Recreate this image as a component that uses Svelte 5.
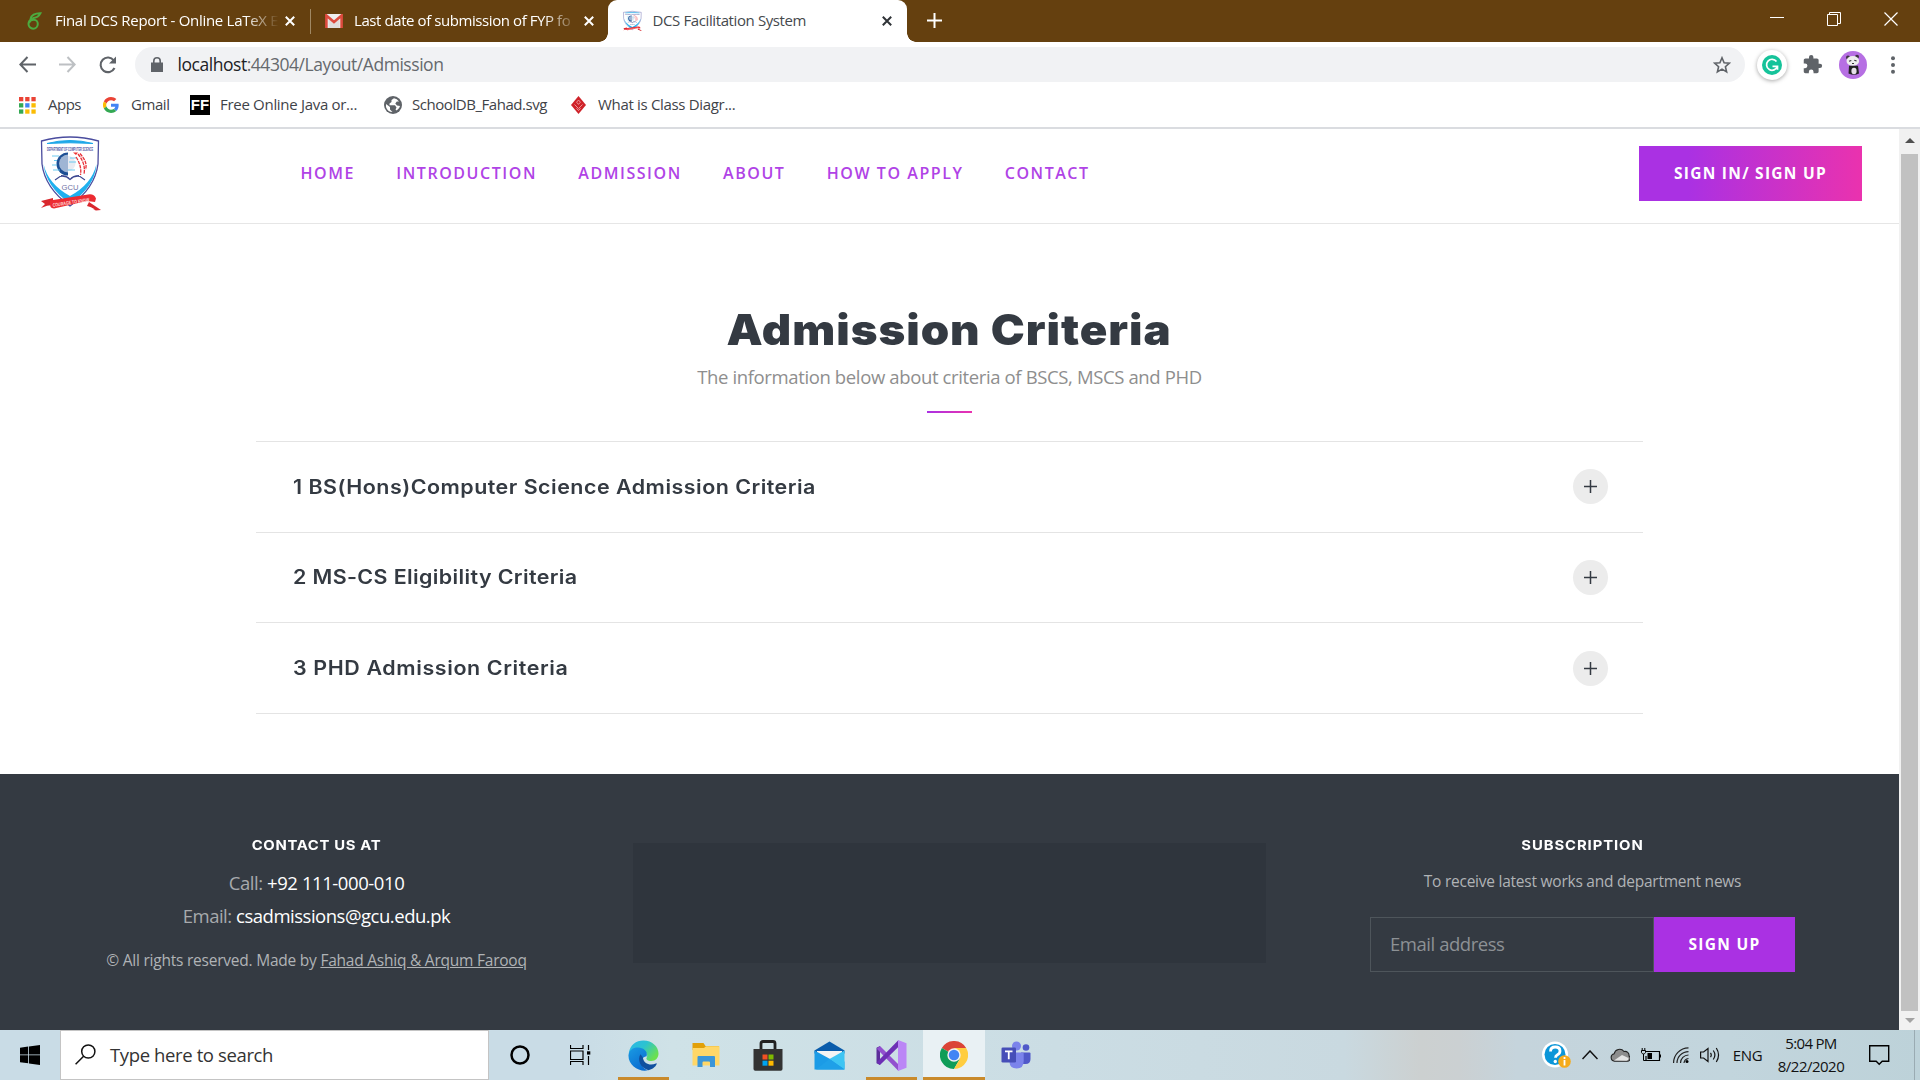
<script>
  const bookmarks = [
    { icon: 'apps', label: 'Apps', cls: 'bm-apps' },
    { icon: 'google', label: 'Gmail', cls: 'bm-gmail' },
    { icon: 'ff', label: 'Free Online Java or...', cls: 'bm-java' },
    { icon: 'globe', label: 'SchoolDB_Fahad.svg', cls: 'bm-school' },
    { icon: 'diamond', label: 'What is Class Diagr...', cls: 'bm-diagram' }
  ];
  const navItems = ['HOME', 'INTRODUCTION', 'ADMISSION', 'ABOUT', 'HOW TO APPLY', 'CONTACT'];
  const criteria = [
    '1 BS(Hons)Computer Science Admission Criteria',
    '2 MS-CS Eligibility Criteria',
    '3 PHD Admission Criteria'
  ];
  const apps = [
    { name: 'edge', open: true },
    { name: 'explorer' },
    { name: 'store' },
    { name: 'mail' },
    { name: 'vs', open: true },
    { name: 'chrome', active: true },
    { name: 'teams' }
  ];
  const appDots = [0, 6.2, 12.4];
  const appColors = ['#ea4335', '#ea4335', '#ea4335', '#34a853', '#4285f4', '#fbbc04', '#34a853', '#fbbc04', '#fbbc04'];
</script>

{#snippet crest()}
  <svg class="crest" viewBox="0 0 61 75" preserveAspectRatio="none">
    <path d="M1.5 5Q30-3 58.5 5L58 28Q55 52 30 70Q5 52 2 28Z" fill="#fff" stroke="#4a4c9e" stroke-width="1.3" />
    <path d="M7 7.5Q30 1.5 53 7.5Q30 6 7 7.5Z" fill="#1fa8e8" stroke="#1fa8e8" />
    <path d="M3.5 28Q8 48 30 60Q52 48 56.500 28Q55 51 30 67.500Q6 51 3.500 28Z" fill="#1fb0ee" />
    <text x="7" y="15.300" font-size="4.800" font-weight="700" textLength="46" lengthAdjust="spacingAndGlyphs" fill="#4d529f">DEPARTMENT OF COMPUTER SCIENCE</text>
    <path d="M28 16.500A11.500 11.500 0 0 0 28 39.500Z" fill="#1d4f94" />
    <path d="M28 18.500a9 9 0 0 0 0 18Z" fill="#9fb5d4" />
    <path d="M28 20a7.500 7.500 0 0 1 0 15Z" fill="#e8ebf2" />
    <path d="M12 20h7M14 24.500h3M12 29h5M13 34h7M30 22h6M29 26h7M28 34h7" stroke="#5cc4ee" stroke-width=".9" />
    <path d="M33 16.500h5l-2 2.500z" fill="#e33" />
    <path d="M38 18q8 10 6 20M40 17.500q8 9 5.500 16M36 21q6 9 4.500 18" fill="none" stroke="#e8323a" stroke-width="1.300" stroke-dasharray="3.500 .9" />
    <path d="M15 44l5-3.500q6-1 10 3q4-4 10-3l5 3.500M21 39.500q6 0 9 4q3-4 9-4" fill="none" stroke="#3a4690" stroke-width="1.100" />
    <text x="21.500" y="54.300" font-size="8" textLength="17" lengthAdjust="spacingAndGlyphs" fill="#7173a6">GCU</text>
    <path d="M1 65l12-3v7q-6 0-12 3l4-4zM49 66l12 8-5 .5-3-1 2 0q-4-3-8-3.500z" fill="#d9272d" />
    <path d="M10 64.500l38-6q6-1 8 4l-1 3.500-8-1-33 7.500q-5 0-4-8z" fill="#ec2b31" />
    <text x="13" y="71" font-size="5" font-weight="700" transform="rotate(-9 13 71)" textLength="37" lengthAdjust="spacingAndGlyphs" fill="#ffd9d9">COURAGE TO KNOW</text>
  </svg>
{/snippet}

{#snippet cross(cls)}
  <svg class={cls} viewBox="0 0 10 10"><path d="M.8.800l8.400 8.400M9.200.800L.800 9.200" stroke="currentColor" stroke-width="2" /></svg>
{/snippet}

{#snippet bookmarkIcon(name)}
  {#if name === 'apps'}
    <svg class="bicon" width="17" height="17" viewBox="0 0 17 17">
      {#each appColors as c, i}
        <rect x={appDots[i % 3]} y={appDots[Math.floor(i / 3)]} width="4.300" height="4.300" fill={c} />
      {/each}
    </svg>
  {:else if name === 'google'}
    <svg class="bicon" width="16" height="16" viewBox="0 0 48 48">
      <path fill="#ea4335" d="M24 9.500c3.500 0 6.700 1.200 9.200 3.600l6.900-6.900C35.900 2.400 30.500 0 24 0 14.600 0 6.500 5.400 2.600 13.200l8 6.200C12.400 13.700 17.700 9.500 24 9.500z" />
      <path fill="#4285f4" d="M47 24.500c0-1.600-.2-3.100-.4-4.500H24v9h12.900c-.6 3-2.200 5.500-4.700 7.200l7.700 6C44.400 38 47 31.800 47 24.500z" />
      <path fill="#fbbc05" d="M10.500 28.600A14 14 0 0 1 10.500 19.400l-8-6.200a24 24 0 0 0 0 21.600z" />
      <path fill="#34a853" d="M24 48c6.500 0 11.900-2.100 15.900-5.800l-7.700-6c-2.200 1.400-4.900 2.300-8.200 2.300-6.300 0-11.600-4.200-13.500-9.900l-8 6.200C6.500 42.600 14.600 48 24 48z" />
    </svg>
  {:else if name === 'ff'}
    <span class="ff">FF</span>
  {:else if name === 'globe'}
    <svg class="bicon" width="18" height="18" viewBox="0 0 18 18">
      <circle cx="9" cy="9" r="9" fill="#5f6368" />
      <path d="M2 8l4 3v2.500l2.500 2.500q-5 0-6.500-5zM10 2.200L7.500 4v2L5.500 7.500v1.800h5.500l1.500 2.200-1 2 1.200 1q3-2 3.300-4.500l-3-.5-1.700-2 1.500-2h2.200Q13 2.800 10 2.200z" fill="#fff" />
    </svg>
  {:else}
    <svg class="bicon" width="15" height="18" viewBox="0 0 15 18">
      <path d="M7.500 0L15 9l-7.500 9L0 9z" fill="#cf2229" />
      <path d="M7.500 4l1.900 2.200-1.900 2.200-1.900-2.200zM3.500 8.500l4 4 4-4M5.500 12.300l2 2.200 2-2.200" fill="none" stroke="#eda3a6" stroke-width=".9" />
    </svg>
  {/if}
{/snippet}

{#snippet appIcon(name)}
  {#if name === 'edge'}
    <svg width="31" height="31" viewBox="0 0 31 31">
      <defs>
        <linearGradient id="eg1" x1="0" y1="0" x2="1" y2=".6"><stop offset="0" stop-color="#2bb5ea" /><stop offset=".5" stop-color="#2cc3d0" /><stop offset="1" stop-color="#6be04f" /></linearGradient>
        <linearGradient id="eg2" x1="0" y1="0" x2=".6" y2="1"><stop offset="0" stop-color="#1a9be3" /><stop offset="1" stop-color="#0a6cd0" /></linearGradient>
      </defs>
      <path d="M.8 13C2 5 8 .5 15.500.5 24 .5 30.500 6.500 30.500 13.500c0 4.500-3 7.500-7 7.500-4 0-5.500-1.500-5-3 1.800-2.500.3-6-4-7C9 9.800 3.500 11 .8 13z" fill="url(#eg1)" />
      <path d="M.5 15C1 10 5.500 7.300 10 7.500c6.500.2 10 4.500 8.500 9-4 0-6 4-4.500 8 1 3 3 5 6 5.800-9 2-20-5-19.500-15.300z" fill="url(#eg2)" />
      <path d="M12.500 14.200c-3.500 5.300-.5 13.300 8 16 3.500-.7 7-3.200 8.200-6.200.2-.6-.3-.9-.8-.6-5.500 2.800-12.500.3-13-5.900z" fill="#10509f" />
    </svg>
  {:else if name === 'explorer'}
    <svg width="28" height="24" viewBox="0 0 28 24">
      <path d="M.5 0h11l2 3h13.500v4H.5z" fill="#e2a008" />
      <path d="M.5 5h11.500l2-1.800h13.500v19.300H.5z" fill="#ffd768" />
      <path d="M5.500 24V14q0-1 1-1h15.500q1 0 1 1v10h-5v-4.500q0-1-1-1h-5.500q-1 0-1 1V24z" fill="#3b96d8" />
    </svg>
  {:else if name === 'store'}
    <svg width="30" height="31" viewBox="0 0 30 31">
      <path d="M8 10V3.500q0-2 2-2h10q2 0 2 2V10" fill="none" stroke="#222" stroke-width="2.800" />
      <path d="M.5 9h29v20q0 1.800-1.800 1.800H2.300Q.5 30.800.5 29z" fill="#333" />
      <path d="M9.500 14.500h5v5h-5z" fill="#f25022" /><path d="M15.500 14.500h5v5h-5z" fill="#7fba00" />
      <path d="M9.500 20.700h5v5h-5z" fill="#00a4ef" /><path d="M15.500 20.700h5v5h-5z" fill="#ffb900" />
    </svg>
  {:else if name === 'mail'}
    <svg width="31" height="29" viewBox="0 0 31 29">
      <path d="M15.500.5L30.500 9.500v3H.5v-3z" fill="#0a5cab" />
      <path d="M3 10h25v8l-12.500 5L3 18z" fill="#f4f4f4" />
      <path d="M.5 9.500l22 12 8-1V28.500H.5z" fill="#1b9be6" />
      <path d="M30.500 9.500L15.500 18l15 10.500z" fill="#3ec5f3" />
      <path d="M15.500 18l15 10.500H2z" fill="#1fa0e8" />
    </svg>
  {:else if name === 'vs'}
    <svg width="31" height="31" viewBox="0 0 31 31">
      <path d="M.5 7.800L4 6v19L.5 23.200z" fill="#5c2d9b" />
      <path d="M4 6L22.500 24.500V31L.8 8.800z" fill="#9250cf" />
      <path d="M4 25L22.500 6.800V0L.8 22.200z" fill="#6d2fb5" />
      <path d="M22 0l8.500 3.300v24.400L22 31z" fill="#bb86f6" />
    </svg>
  {:else if name === 'chrome'}
    <svg width="28" height="28" viewBox="0 0 48 48">
      <path d="M24 24L3.200 12A24 24 0 0 1 44.800 12z" fill="#db4437" />
      <path d="M24 24L3.200 12A24 24 0 0 0 24 48l10.400-18z" fill="#0f9d58" />
      <path d="M24 12h20.800A24 24 0 0 1 24 48l10.400-18z" fill="#ffcd40" />
      <circle cx="24" cy="24" r="11.500" fill="#f1f1f1" /><circle cx="24" cy="24" r="9" fill="#4285f4" />
    </svg>
  {:else}
    <svg width="30" height="28" viewBox="0 0 30 28">
      <circle cx="25" cy="6.500" r="3.300" fill="#5059c9" />
      <path d="M20 11.500h8.500q1 0 1 1V18q0 5-5 5h-4z" fill="#5059c9" />
      <circle cx="15.500" cy="5" r="4.500" fill="#7b83eb" />
      <path d="M9.500 11.500h12q1.200 0 1.200 1.200V20q0 7.500-7 7.500T8.500 21z" fill="#7b83eb" />
      <rect x=".5" y="6.500" width="14.500" height="15" rx="1.300" fill="#464eb8" />
      <path d="M4 10.300h7.500M7.750 10.300v8" stroke="#fff" stroke-width="1.800" />
    </svg>
  {/if}
{/snippet}

<div class="screen">
  <div class="tabstrip">
    <div class="tab tab-a">
      <svg width="15" height="18" viewBox="0 0 15 18"><path d="M5.500 6.500C2.500 8 1.500 10 1.500 12a4.600 4.600 0 0 0 9.300 0c0-2.500-1.700-4.300-4-4.300-2 0-3.800 1-4.800 3M3.500 7C4 3.500 8 1 13.500 1.200 12 4.500 9 6 5.500 6.300" fill="none" stroke="#4cab3f" stroke-width="2" /></svg>
      <span class="tab-title t1">Final DCS Report - Online LaTeX E</span>
      {@render cross('x')}
    </div>
    <i class="sep"></i>
    <div class="tab tab-b">
      <svg width="18" height="14" viewBox="0 0 18 14"><path d="M1 0h16v14H1z" fill="#eee" /><path d="M3.500 14V5L9 9.500 14.500 5v9" fill="#e0dedc" /><path d="M1.400 14V1.500L9 8l7.600-6.500V14" fill="none" stroke="#dd4b3e" stroke-width="2.600" /></svg>
      <span class="tab-title t2">Last date of submission of FYP fo</span>
      {@render cross('x')}
    </div>
    <div class="tab active">
      <span class="favicon">{@render crest()}</span>
      <span class="tab-title t3">DCS Facilitation System</span>
      {@render cross('x dark')}
    </div>
    <svg class="plus-tab" width="15" height="15" viewBox="0 0 15 15"><path d="M7.500 0v15M0 7.500h15" stroke="#fff" stroke-width="2" /></svg>
    <div class="winctl">
      <svg width="14" height="14" viewBox="0 0 14 14"><path d="M0 5.500h14" stroke="#fff" /></svg>
      <svg width="14" height="14" viewBox="0 0 14 14"><path d="M.5 2.500h10v11H.5zM2.500 2.500V.5h11v11h-2.500" fill="none" stroke="#fff" /></svg>
      <svg width="14" height="14" viewBox="0 0 14 14"><path d="M.5.500l13 13M13.500.500l-13 13" stroke="#fff" stroke-width="1.200" /></svg>
    </div>
  </div>

  <div class="toolbar">
    <div class="navbtns">
      <svg width="17" height="17" viewBox="0 0 17 17"><path d="M17 8.500H1.500M8.500 1L1.300 8.500l7.200 7.500" fill="none" stroke="#5f6368" stroke-width="2" /></svg>
      <svg width="17" height="17" viewBox="0 0 17 17"><path d="M0 8.500h15.500M8.500 1l7.200 7.500L8.500 16" fill="none" stroke="#bdc0c3" stroke-width="2" /></svg>
      <svg width="18" height="18" viewBox="0 0 18 18"><path d="M15.500 12A7.300 7.300 0 1 1 14.800 4.500" fill="none" stroke="#5f6368" stroke-width="2.100" /><path d="M17 .5v7h-7z" fill="#5f6368" /></svg>
    </div>
    <div class="omnibox">
      <svg width="12" height="15" viewBox="0 0 12 15"><path d="M0 5.500h12V15H0z" fill="#5f6368" /><path d="M2.800 6V4a3.200 3.200 0 0 1 6.400 0v2" fill="none" stroke="#5f6368" stroke-width="1.600" /></svg>
      <span class="url"><b>localhost</b>:44304/Layout/Admission</span>
      <svg class="star" width="18" height="18" viewBox="0 0 18 18"><path d="M9 1.800l2.100 4.900 5.300.5-4 3.500 1.200 5.200L9 13.100l-4.600 2.800 1.200-5.200-4-3.500 5.300-.5z" fill="none" stroke="#5f6368" stroke-width="1.600" /></svg>
    </div>
    <span class="grammarly"><svg width="20" height="20" viewBox="0 0 20 20"><circle cx="10" cy="10" r="10" fill="#15c39a" /><path d="M14.500 6.500A5.500 5.500 0 1 0 15.300 11.500M10.500 11.300h5v3.500" fill="none" stroke="#fff" stroke-width="1.700" /></svg></span>
    <svg class="puzzle" width="21" height="21" viewBox="0 0 24 24"><path d="M20.500 11H19V7c0-1.100-.9-2-2-2h-4V3.500a2.500 2.500 0 0 0-5 0V5H4c-1.100 0-2 .9-2 2v3.800h1.500a2.700 2.700 0 0 1 0 5.400H2V20c0 1.100.9 2 2 2h3.800v-1.500a2.700 2.700 0 0 1 5.400 0V22H17c1.100 0 2-.9 2-2v-4h1.500a2.500 2.500 0 0 0 0-5z" fill="#5f6368" /></svg>
    <svg class="avatar" width="28" height="28" viewBox="0 0 28 28">
      <circle cx="14" cy="14" r="14" fill="#b66fe3" />
      <circle cx="9" cy="6.500" r="2" fill="#3c3340" /><circle cx="18" cy="5.800" r="2" fill="#3c3340" />
      <ellipse cx="13.800" cy="10" rx="6.300" ry="5" fill="#eee" />
      <path d="M10 10.300l2.300-.8M15.300 9.300l2.300.7M13 12.500h2" stroke="#333" stroke-width="1.200" />
      <path d="M10 14.800h9l1 7.700q-5 2.500-10.500 0z" fill="#222" /><ellipse cx="15" cy="20" rx="2.600" ry="3.300" fill="#e5e0e8" />
    </svg>
    <svg class="dots" width="4" height="18" viewBox="0 0 4 18"><circle cx="2" cy="2.200" r="2" fill="#5f6368" /><circle cx="2" cy="9" r="2" fill="#5f6368" /><circle cx="2" cy="15.800" r="2" fill="#5f6368" /></svg>
  </div>

  <div class="bookmarks">
    {#each bookmarks as b}
      <span class="bookmark {b.cls}">{@render bookmarkIcon(b.icon)}<span class="bm-label">{b.label}</span></span>
    {/each}
  </div>

  <div class="viewport">
    <div class="page">
      <header>
        <span class="logo">{@render crest()}</span>
        <nav>
          {#each navItems as item}<a href="#top">{item}</a>{/each}
        </nav>
        <button class="signin">SIGN IN/ SIGN UP</button>
      </header>

      <main>
        <h1>Admission Criteria</h1>
        <p class="sub">The information below about criteria of BSCS, MSCS and PHD</p>
        <i class="rule"></i>
        <div class="accordion">
          {#each criteria as c}
            <div class="row">
              <span class="title">{c}</span>
              <span class="plus"><svg width="13" height="13" viewBox="0 0 13 13"><path d="M6.500 0v13M0 6.500h13" stroke="#343a42" stroke-width="1.500" /></svg></span>
            </div>
          {/each}
        </div>
      </main>

      <footer>
        <section>
          <h4>CONTACT US AT</h4>
          <p class="line call">Call: <b>+92 111-000-010</b></p>
          <p class="line email">Email: <b>csadmissions@gcu.edu.pk</b></p>
          <p class="copy">© All rights reserved. Made by <u>Fahad Ashiq &amp; Arqum Farooq</u></p>
        </section>
        <section><div class="panel"></div></section>
        <section>
          <h4 class="subscr">SUBSCRIPTION</h4>
          <p class="news">To receive latest works and department news</p>
          <div class="form">
            <span class="field">Email address</span>
            <button>SIGN UP</button>
          </div>
        </section>
      </footer>
    </div>
    <div class="scrollbar">
      <i class="up"></i>
      <i class="thumb"></i>
      <i class="down"></i>
    </div>
  </div>

  <div class="taskbar">
    <span class="start"><svg width="20" height="20" viewBox="0 0 20 20"><path d="M0 2.800l8.200-1.200V9.500H0zM9 1.500L20 0v9.500H9zM0 10.300h8.200v8L0 17.200zM9 10.300h11V20L9 18.500z" fill="#000" /></svg></span>
    <div class="search">
      <svg width="21" height="21" viewBox="0 0 21 21"><circle cx="13.300" cy="7.500" r="6.600" fill="none" stroke="#111" stroke-width="1.500" /><path d="M8.600 12.300L.6 20.300" stroke="#111" stroke-width="1.500" /></svg>
      <span>Type here to search</span>
    </div>
    <span class="slot"><svg width="20" height="20" viewBox="0 0 20 20"><circle cx="10" cy="10" r="8.500" fill="none" stroke="#000" stroke-width="2.500" /></svg></span>
    <span class="slot"><svg width="21" height="20" viewBox="0 0 21 20"><path d="M.5 0v3.500h12.500V0M.5 6h12.500v8.500H.5zM.5 20v-3.500h12.500V20M18.500 0v5M18.500 11v9" fill="none" stroke="#000" stroke-width="1.200" /><path d="M17 6.300h3.300v3.300H17z" /></svg></span>
    <div class="apps">
      {#each apps as a}
        <span class="app" class:open={a.open} class:current={a.active}>{@render appIcon(a.name)}</span>
      {/each}
    </div>
    <div class="tray">
      <svg width="29" height="28" viewBox="0 0 29 28"><circle cx="13" cy="13.500" r="13" fill="#fff" /><circle cx="13" cy="13.500" r="10.500" fill="#0b96d8" /><path d="M8.500 10.500q0-4.500 4.800-4.500 4.700 0 4.700 4 0 2.500-2.500 3.800-2 1-2 3" fill="none" stroke="#fff" stroke-width="2.800" /><circle cx="13.300" cy="20.500" r="1.700" fill="#fff" /><circle cx="22.500" cy="20.500" r="6.300" fill="#f5ab1b" /><path d="M22.500 19v5.500M22.500 16v2" stroke="#fff" stroke-width="1.800" /></svg>
      <svg width="16" height="10" viewBox="0 0 16 10"><path d="M.5 9L8 1l7.500 8" fill="none" stroke="#111" stroke-width="1.500" /></svg>
      <svg width="20" height="14" viewBox="0 0 20 14"><path d="M4.500 13.200a3.800 3.800 0 0 1-.3-7.500A5.500 5.500 0 0 1 14 3.500a4 4 0 0 1 5 4.500 2.900 2.900 0 0 1-2 5.200z" fill="#8d8d8d" stroke="#222" stroke-width="1.100" /><path d="M4 12.500l8-5.500 6.500 3q0 2.500-2 2.700z" fill="#e4e4e4" /></svg>
      <svg width="20" height="14" viewBox="0 0 20 14"><path d="M5 3.500h13.500v9H5V8" fill="none" stroke="#000" stroke-width="1.200" /><path d="M6.500 5h4.500v6h-4.500zM18.500 6.500H20v3h-1.500z" /><path d="M.5 2.500h4v2q-.7 1.500-2 1.500T.5 4.500zM1.200 0v2.500M3.800 0v2.500M2.500 6v6.500H5" fill="none" stroke="#000" /></svg>
      <svg width="16" height="16" viewBox="0 0 16 16"><g fill="none" stroke="#222" stroke-width="1.200"><path d="M.6 16A15 15 0 0 1 15.500.8M4 16A11.500 11.500 0 0 1 15.500 4.600M7.500 16a8 8 0 0 1 8-8M11 16q.5-4 4.500-4.500" /></g><circle cx="14" cy="14.500" r="1.500" /></svg>
      <svg width="20" height="16" viewBox="0 0 20 16"><g fill="none" stroke="#111" stroke-width="1.200"><path d="M.6 5h3L8 1.500v13L3.600 11h-3z" /><path d="M10.500 5.800q1.500 2.200 0 4.400M13.300 3.500q3.200 4.500 0 9M16.300 1q4.500 7 0 14" /></g></svg>
      <span class="lang">ENG</span>
      <span class="clock"><span class="time">5:04 PM</span><span class="date">8/22/2020</span></span>
      <svg class="note" width="21" height="21" viewBox="0 0 21 21"><path d="M.700.700h19v15.600h-6.500l-3 3-3-3H.700z" fill="none" stroke="#000" stroke-width="1.400" /></svg>
      <i class="desk"></i>
    </div>
  </div>
</div>

<style>
  :global(body) { margin: 0; overflow: hidden; }
  .screen, .screen * { box-sizing: border-box; }
  .screen { width: 1920px; height: 1080px; display: flex; flex-direction: column; background: #fff; font-family: 'Open Sans', sans-serif; }
  .screen svg { display: block; flex: none; }
  p, h1, h4 { margin: 0; }
  i { display: block; }
  .crest { width: 100%; height: 100%; overflow: visible; font-family: 'Liberation Sans', sans-serif; }

  /* browser tabs */
  .tabstrip { height: 42px; display: flex; background: #65400f; color: #fff; font-size: 15px; }
  .tab { height: 41px; display: flex; align-items: center; }
  .tab-a { width: 310px; padding: 0 15px 0 27px; gap: 13px; }
  .tab-b { width: 297px; padding: 0 14px 0 14px; gap: 11px; }
  .tab-title { flex: none; white-space: nowrap; line-height: 24px; padding-bottom: 2px; }
  .t1 { letter-spacing: -0.29px; margin-right: -12px; -webkit-mask-image: linear-gradient(90deg, #000 190px, transparent 224px); mask-image: linear-gradient(90deg, #000 190px, transparent 224px); }
  .t2 { letter-spacing: -0.42px; margin-right: -12px; -webkit-mask-image: linear-gradient(90deg, #000 190px, transparent 224px); mask-image: linear-gradient(90deg, #000 190px, transparent 224px); }
  .x { width: 10px; height: 10px; margin-left: auto; }
  .sep { width: 1px; height: 25px; margin-top: 9px; background: #a08863; }
  .active { position: relative; width: 299px; height: 42px; padding: 0 15px 1px 15px; background: #fff; border-radius: 9px 9px 0 0; color: #45494d; }
  .active::before, .active::after { content: ''; position: absolute; bottom: 0; width: 9px; height: 9px; }
  .active::before { left: -9px; background: radial-gradient(circle at 0 0, transparent 8.500px, #fff 9px); }
  .active::after { right: -9px; background: radial-gradient(circle at 100% 0, transparent 8.500px, #fff 9px); }
  .favicon { width: 19px; height: 20px; }
  .t3 { margin-left: 10.500px; letter-spacing: -0.39px; }
  .dark { color: #2f3337; }
  .plus-tab { margin: 13px 0 0 20px; }
  .winctl { margin: 12px 22px 0 auto; display: flex; gap: 43px; }

  /* address row */
  .toolbar { height: 45px; display: flex; align-items: center; }
  .navbtns { width: 135px; padding-left: 19px; display: flex; align-items: center; gap: 23px; }
  .omnibox { width: 1610px; height: 35px; padding: 0 14px 0 16px; display: flex; align-items: center; border-radius: 18px; background: #f1f2f4; }
  .url { margin: 0 auto 0 14.500px; padding-bottom: 2px; font-size: 17.5px; letter-spacing: -0.46px; line-height: 26px; color: #65696d; }
  .url b { font-weight: 400; color: #202124; }
  .grammarly { width: 30px; height: 30px; margin-left: 12px; display: grid; place-items: center; border-radius: 50%; box-shadow: 0 1px 4px rgba(0, 0, 0, .35); }
  .puzzle { margin-left: 15px; }
  .avatar { margin-left: 16px; }
  .dots { margin-left: 24px; }

  .bookmarks { height: 42px; padding: 0 0 4px 19px; display: flex; align-items: center; border-bottom: 2px solid #dadce0; font-size: 15px; color: #3f4348; }
  .bookmark { display: flex; align-items: center; white-space: nowrap; line-height: 24px; }
  .bm-label { padding-bottom: 2px; }
  .bm-apps { width: 84px; gap: 12px; letter-spacing: -0.5px; }
  .bm-gmail { width: 87px; gap: 12px; letter-spacing: -0.43px; }
  .bm-java { width: 194px; gap: 10px; letter-spacing: -0.3px; }
  .bm-school { width: 187px; gap: 10px; letter-spacing: -0.45px; }
  .bm-diagram { gap: 12px; letter-spacing: -0.32px; }
  .ff { width: 20px; height: 20px; background: #000; color: #fff; font: 700 15px/20px 'Liberation Sans', sans-serif; letter-spacing: 0; text-align: center; }

  /* page */
  .viewport { height: 901px; display: flex; }
  .page { width: 1899px; background: #fff; }
  header { height: 95px; padding: 0 37px 6px 40px; display: flex; align-items: center; border-bottom: 1px solid #e6e6e6; }
  .logo { width: 61px; height: 75px; }
  nav { margin-left: 199.500px; display: flex; gap: 41.300px; font-size: 16px; font-weight: 600; letter-spacing: 1.550px; line-height: 24px; }
  nav a { color: #b043e6; text-decoration: none; }
  button { border: 0; padding: 0; font-family: inherit; font-weight: 700; font-size: 15.500px; color: #fff; }
  .signin { width: 223px; height: 55px; margin-left: auto; letter-spacing: 1.280px; background: linear-gradient(90deg, #aa31e3 22%, #ea32ae); }

  main { height: 550px; padding: 81px 0 0; display: flex; flex-direction: column; align-items: center; }
  h1 { font: 900 42px/50px Inter, sans-serif; letter-spacing: 0.900px; transform: scaleX(1.085); color: #343a42; }
  .sub { margin-top: 7px; font-size: 18.500px; font-weight: 400; line-height: 30px; letter-spacing: -0.370px; color: #8e8e8e; }
  .rule { width: 45px; height: 2px; margin-top: 19px; background: linear-gradient(90deg, #aa31e3, #ea32ae); }
  .accordion { width: 1387px; margin-top: 28px; border-top: 1px solid #e4e4e4; }
  .row { height: 90.670px; padding: 0 35px 0 36.700px; display: flex; align-items: center; justify-content: space-between; border-bottom: 1px solid #e4e4e4; font: 600 19.500px/26px Inter, sans-serif; letter-spacing: 0.440px; color: #343a42; }
  .row:nth-child(2) { letter-spacing: 0.340px; }
  .row:nth-child(3) { letter-spacing: 0.550px; }
  .title { transform: scaleX(1.1); transform-origin: left center; }
  .plus { width: 35px; height: 35px; display: grid; place-items: center; border-radius: 50%; background: #ececec; }

  footer { height: 256px; display: grid; grid-template-columns: repeat(3, 1fr); background: #343a42; color: #a7aaad; text-align: center; }
  section { padding-top: 61px; }
  h4 { font: 700 13.500px/20px Inter, sans-serif; letter-spacing: 0.600px; transform: scaleX(1.1); color: #fff; }
  .subscr { letter-spacing: 0.820px; }
  .line { font-size: 18.500px; line-height: 33px; letter-spacing: -0.480px; }
  .call { margin-top: 11px; letter-spacing: -0.430px; }
  .line b { font-weight: 400; color: #fff; }
  .copy { margin-top: 16px; font-size: 15.500px; line-height: 24px; letter-spacing: -0.230px; color: #b0b3b6; }
  .panel { height: 120px; margin-top: 8px; background: #2f353d; }
  .news { margin-top: 14px; font-size: 15.500px; line-height: 24px; letter-spacing: -0.240px; color: #b0b3b6; }
  .form { width: 425px; height: 55px; margin: 24px auto 0; display: flex; }
  .field { flex: 1; padding-left: 19px; border: 1px solid #4e555b; font-size: 18.500px; line-height: 51px; letter-spacing: -0.450px; text-align: left; color: #8d9195; }
  .form button { width: 141px; padding-bottom: 1px; letter-spacing: 1.300px; background: #aa31e3; }

  .scrollbar { width: 21px; display: flex; flex-direction: column; align-items: center; background: #f1f1f1; }
  .up { margin: 9px 0 11px; border: 5px solid transparent; border-top: 0; border-bottom-color: #505050; }
  .thumb { width: 17px; height: 857px; background: #c1c1c1; }
  .down { margin-top: 7px; border: 5px solid transparent; border-bottom: 0; border-top-color: #a3a3a3; }

  /* desktop taskbar */
  .taskbar { height: 50px; display: flex; color: #111; background: linear-gradient(90deg, #c9dce6 0, #c9dce6 30%, #cfe2e7 35%, #cbdde4 55%, #c9d9e0 70%, #ccd0d0 74%, #cbd0d2 76%, #c5d4dc 79%, #c2d5dd 90%, #bdd2d9 100%); }
  .start { width: 60px; display: grid; place-items: center; }
  .search { width: 429px; height: 49.500px; padding-left: 14px; display: flex; align-items: center; gap: 14px; border: 1px solid #c4c4c4; background: #fff; font-size: 18.500px; letter-spacing: -0.380px; color: #333; }
  .slot { width: 61px; display: grid; place-items: center; }
  .apps { margin-left: 1.500px; display: flex; }
  .app { width: 62px; display: grid; place-items: center; }
  .open { background: linear-gradient(#c98a2b, #c98a2b) center bottom / 51px 3px no-repeat; }
  .current { background: linear-gradient(transparent 47px, #c98a2b 47px), #e9f1f4; }
  .tray { margin-left: auto; display: flex; align-items: center; gap: 11.500px; font-size: 15px; }
  .lang { margin-left: 1px; letter-spacing: -0.270px; }
  .clock { width: 68px; margin-left: 3px; display: flex; flex-direction: column; align-items: center; line-height: 23px; padding-bottom: 1px; }
  .time { letter-spacing: -0.680px; }
  .date { letter-spacing: -0.510px; }
  .note { margin-left: 12px; }
  .desk { width: 1px; height: 50px; margin: 0 5px 0 13px; background: #9aabb2; }
</style>
